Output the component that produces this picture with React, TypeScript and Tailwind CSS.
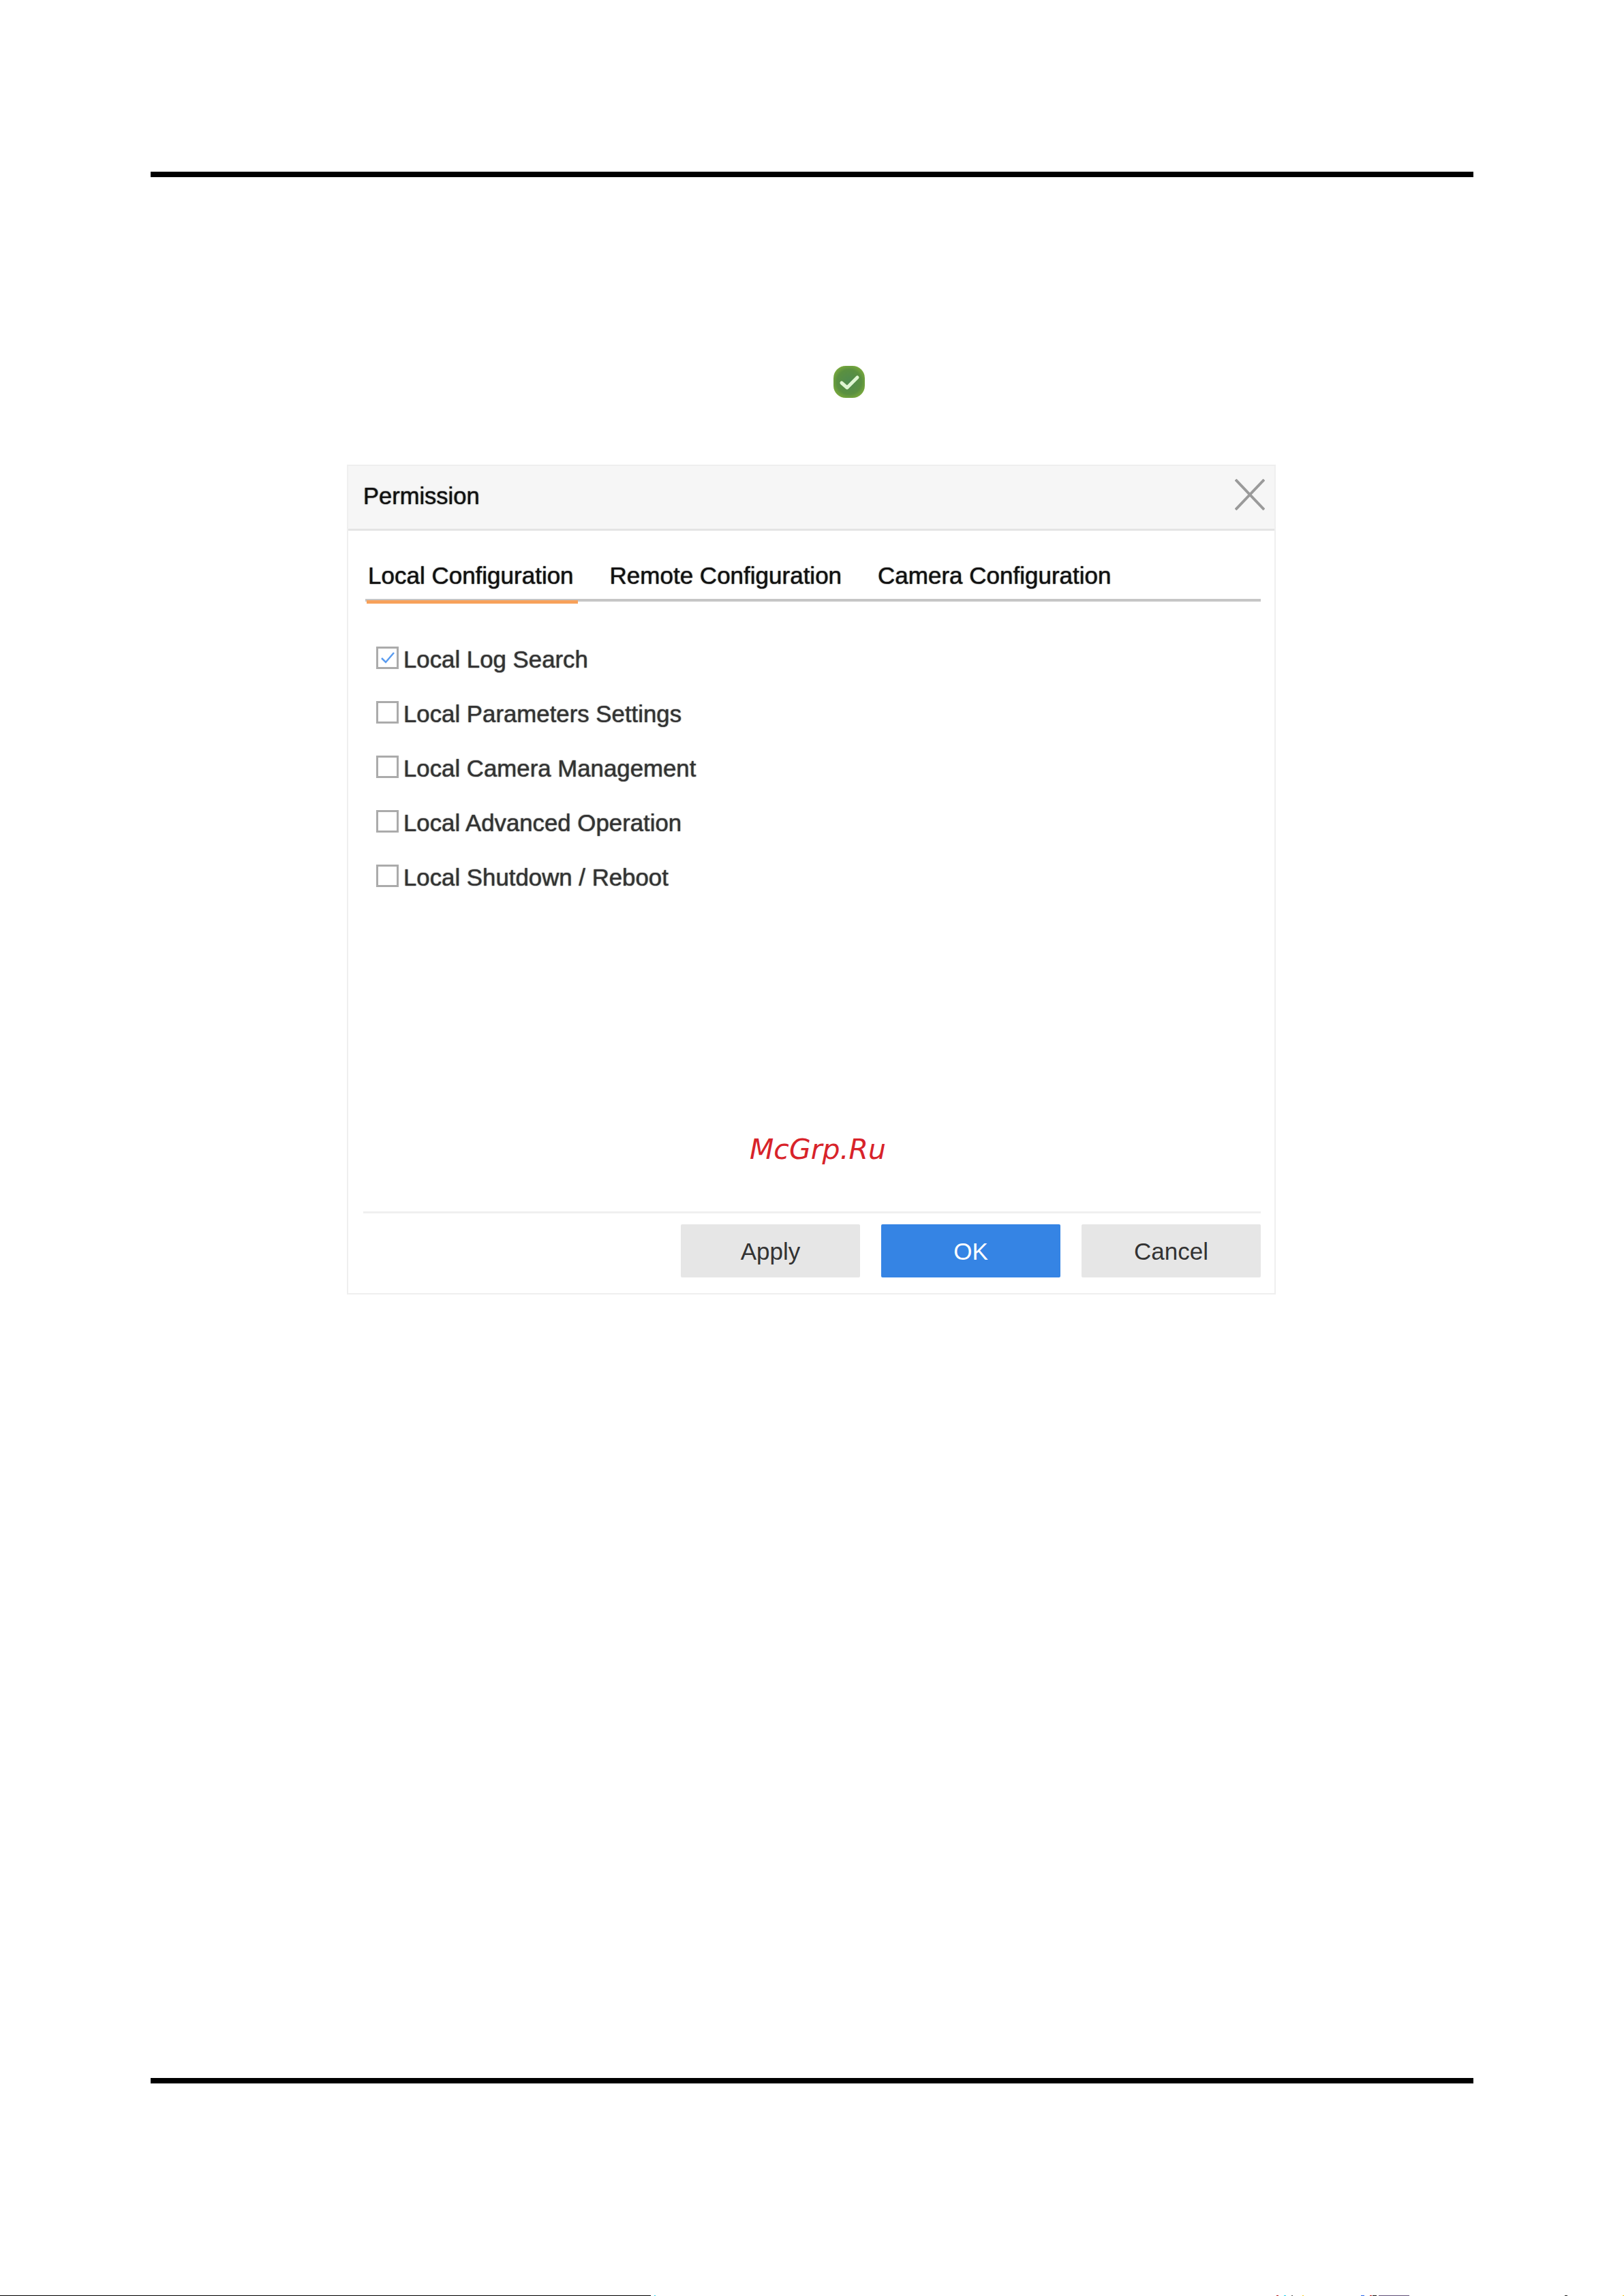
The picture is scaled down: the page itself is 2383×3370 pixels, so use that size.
const font = "font-['Liberation_Sans',Arial,sans-serif]";

const items = [
  { label: "Local Log Search", checked: true },
  { label: "Local Parameters Settings", checked: false },
  { label: "Local Camera Management", checked: false },
  { label: "Local Advanced Operation", checked: false },
  { label: "Local Shutdown / Reboot", checked: false },
];

function Specks() {
  return (
    <div className="flex h-px w-full items-stretch">
      <div className="w-[955px] shrink-0 bg-black" />
      <div className="ml-[5px] w-[2px] shrink-0 bg-[#22d3ee]" />
      <div className="ml-[911px] w-[3px] shrink-0 bg-[#b91c1c]" />
      <div className="ml-[8px] w-[3px] shrink-0 bg-[#22d3ee]" />
      <div className="ml-[8px] w-[2px] shrink-0 bg-[#555555]" />
      <div className="ml-[14px] w-[2px] shrink-0 bg-[#facc15]" />
      <div className="ml-[84px] w-[5px] shrink-0 bg-[#2563eb]" />
      <div className="ml-[8px] w-[3px] shrink-0 bg-[#b91c1c]" />
      <div className="ml-[1px] w-[6px] shrink-0 bg-[#111111]" />
      <div className="ml-[3px] w-[45px] shrink-0 bg-[#5f4f78]" />
      <div className="ml-[228px] w-[4px] shrink-0 bg-[#222222]" />
      <div className="ml-[81px] w-[2px] shrink-0 bg-[#facc15]" />
    </div>
  );
}

export default function App() {
  return (
    <div className={`flex h-[3370px] w-[2383px] flex-col bg-white ${font}`}>
      <div className="mx-[221px] mt-[252px] h-[8px] bg-black" />

      <div className="ml-[1223px] mt-[277px] flex h-[47px] w-[46px] items-center justify-center rounded-[18px] bg-[radial-gradient(circle,#4f8a4f_0%,#5a9040_55%,#7fae3c_82%,#b5d07a_100%)]">
        <svg viewBox="0 0 46 47" className="h-[47px] w-[46px]">
          <path d="M12 25 L20 32 L35 17" fill="none" stroke="#dff5d2" strokeWidth="5" strokeLinecap="round" strokeLinejoin="round" />
        </svg>
      </div>

      <div className="ml-[509px] mt-[98px] flex h-[1218px] w-[1363px] flex-col border-[2px] border-[#efefef] bg-white">
        <div className="flex h-[95px] items-center justify-between border-b-[3px] border-[#e4e4e4] bg-[#f6f6f6] pl-[22px] pr-[14px]">
          <span className="-mt-[3px] text-[34.5px] text-[#111111] [text-shadow:0_0_1.5px_#111111]">Permission</span>
          <svg viewBox="0 0 44 46" className="-mt-[8px] h-[46px] w-[44px]">
            <path d="M1 1 L43 45 M43 1 L1 45" fill="none" stroke="#9a9a9a" strokeWidth="4" />
          </svg>
        </div>

        <div className="ml-[25px] mr-[20px] mt-[32px] flex h-[72px] items-start gap-[54px] border-b-[4px] border-[#c6c6c6] pl-[4px] pt-[4px] text-[35px] leading-[60px] text-[#111111] [text-shadow:0_0_1.5px_#111111]">
          <div className="relative -ml-[2px] h-[68px] px-[2px]">
            <span className="whitespace-nowrap">Local Configuration</span>
            <div className="absolute -bottom-[3px] left-0 h-[5px] w-[310px] bg-[#f7a15a]" />
          </div>
          <span className="-ml-[3px] whitespace-nowrap">Remote Configuration</span>
          <span className="-ml-[1px] whitespace-nowrap">Camera Configuration</span>
        </div>

        <div className="ml-[41px] mt-[69px] flex flex-col gap-[47px]">
          {items.map((it) => (
            <div key={it.label} className="flex h-[33px] items-center gap-[7px]">
              <div className="flex h-[33px] w-[33px] -translate-y-[3px] items-center justify-center border-[3px] border-[#ababab] bg-white">
                {it.checked && (
                  <svg viewBox="0 0 27 27" className="h-[27px] w-[27px]">
                    <path d="M5 14 L11 20 L23 6" fill="none" stroke="#5a9cf0" strokeWidth="2.5" />
                  </svg>
                )}
              </div>
              <span className="whitespace-nowrap text-[34.8px] text-[#333333] [text-shadow:0_0_1.5px_#333333]">{it.label}</span>
            </div>
          ))}
        </div>

        <div className="relative flex flex-1 flex-col justify-end">
          <span className="absolute left-[589px] top-[358px] whitespace-nowrap font-['DejaVu_Sans',sans-serif] text-[41px] italic leading-[48px] text-[#d8232a]">
            McGrp.Ru
          </span>
          <div className="ml-[22px] mr-[20px] border-t-[3px] border-[#efefef] pb-[23px] pt-[16px]">
            <div className="flex justify-end gap-[31px] text-[35px] [text-shadow:0_0_1.5px_currentColor]">
              <button className="h-[78px] w-[263px] rounded-[2px] bg-[#e6e6e6] pt-[2px] text-[#333333]">Apply</button>
              <button className="h-[78px] w-[263px] rounded-[2px] bg-[#3584e4] pt-[2px] text-white">OK</button>
              <button className="h-[78px] w-[263px] rounded-[2px] bg-[#e6e6e6] pt-[2px] text-[#333333]">Cancel</button>
            </div>
          </div>
        </div>
      </div>

      <div className="mx-[221px] mt-[1150px] h-[8px] bg-black" />
      <div className="mt-auto">
        <Specks />
      </div>
    </div>
  );
}
